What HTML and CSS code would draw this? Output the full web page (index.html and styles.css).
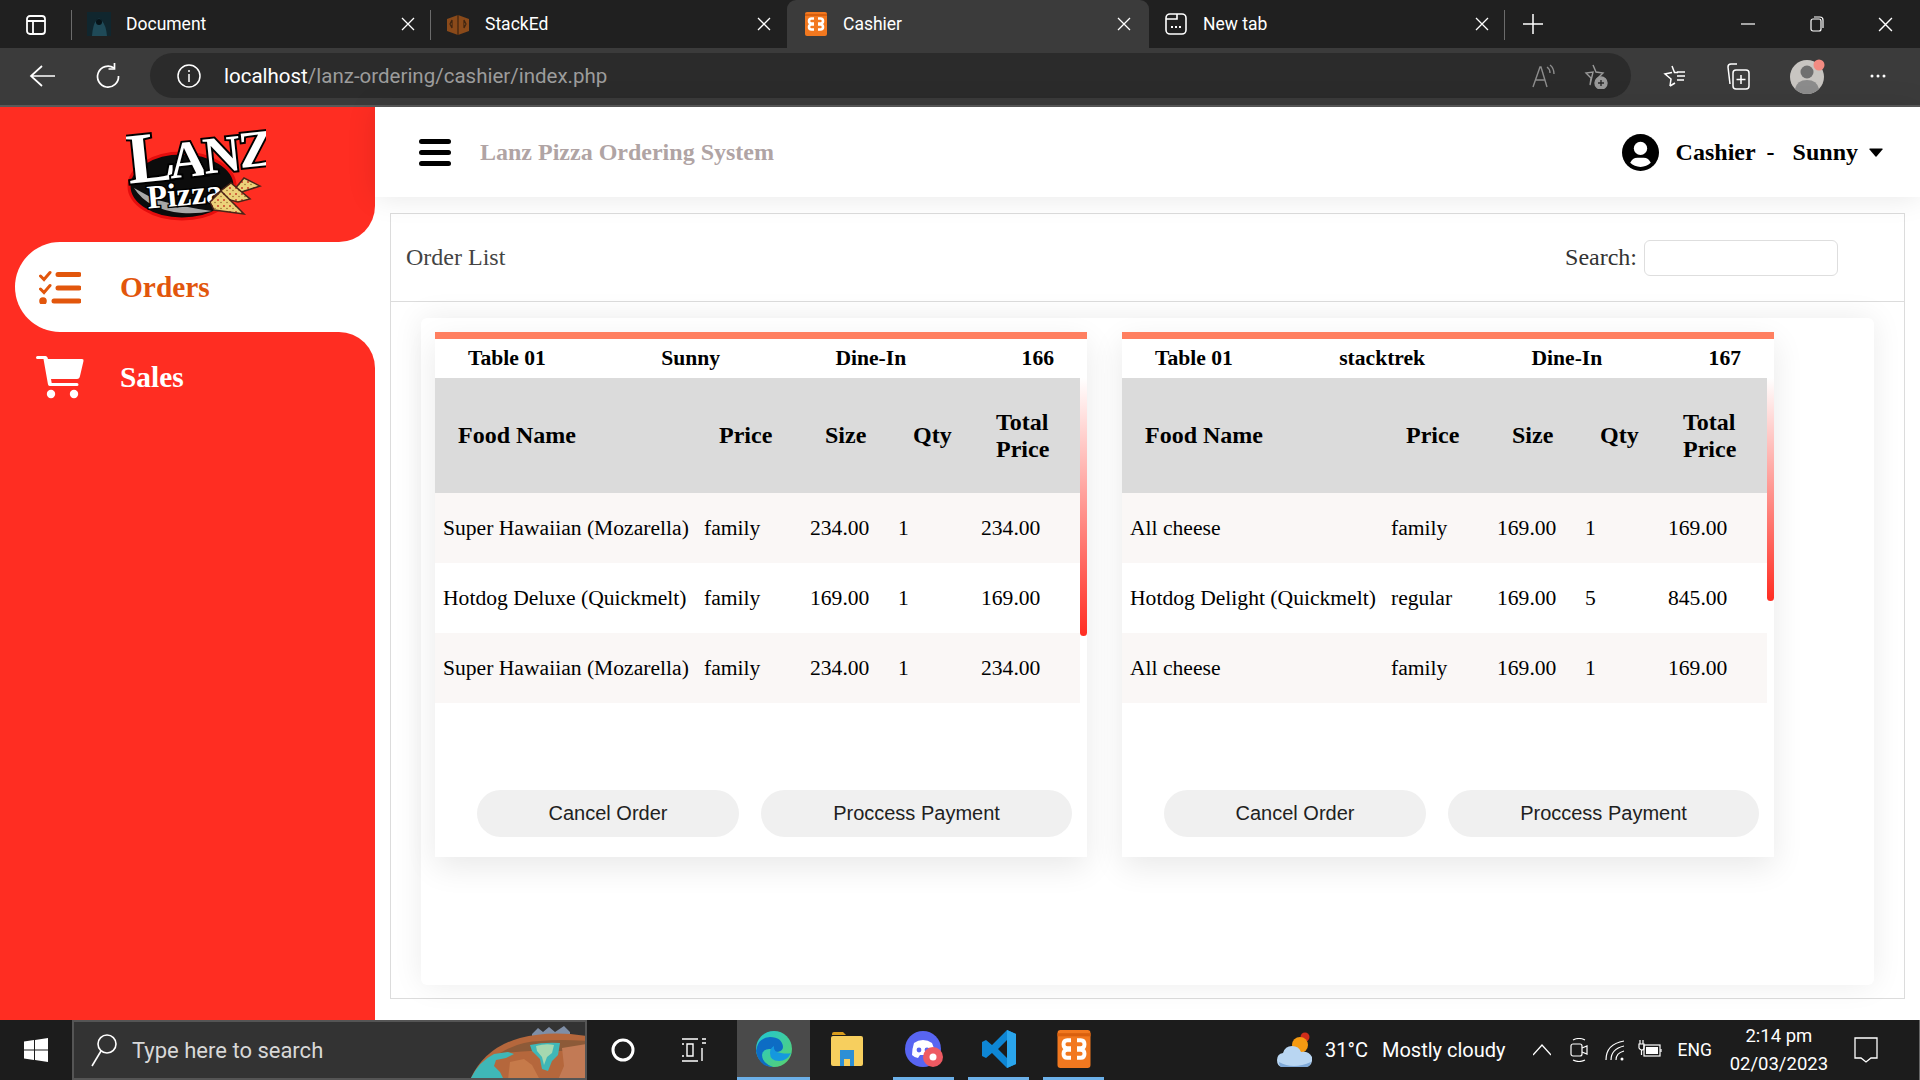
FILE: index.html
```html
<!DOCTYPE html>
<html>
<head>
	<meta charset="utf-8">
	<title>Cashier</title>
	<link rel="stylesheet" href="styles.css">
</head>
<body>
	<svg class="defs" width="0" height="0">
		<symbol id="x-close" viewBox="0 0 14 14"><path d="M1 1l12 12M13 1L1 13" stroke="currentColor" stroke-width="1.3" fill="none"/></symbol>
		<symbol id="xampp" viewBox="0 0 24 24">
			<rect x="1" width="22" height="24" rx="2" fill="#f2781f"/>
			<rect x="1" y="2" width="22" height="2" fill="#d9600f"/>
			<path d="M10 6.5H7.500Q5 6.500 5 9t2.500 2.500H10M10 12.500H7.500Q5 12.500 5 15t2.500 2.500H10M14 6.500h2.500Q19 6.500 19 9t-2.500 2.500H14M14 12.500h2.500Q19 12.500 19 15t-2.500 2.500H14" stroke="#fff" stroke-width="2.600" fill="none"/>
		</symbol>
	</svg>

	<div class="tabstrip">
		<div class="tab-toggle">
			<svg width="22" height="22" viewBox="0 0 22 22" fill="none" stroke="#fff" stroke-width="1.800"><rect x="2" y="2" width="18" height="18" rx="3"/><path d="M2 7h18M8 7v13"/></svg>
		</div>
		<div class="tab tab-sep">
			<svg class="favicon" viewBox="0 0 24 24"><rect width="24" height="30" fill="#10262e"/><path d="M5 24q1-12 4-15 3-5 6 0 4 4 5 15z" fill="#1f4a58"/><circle cx="12" cy="10" r="3" fill="#071318"/></svg>
			<span class="tab-title">Document</span>
			<svg class="tab-x"><use href="#x-close"/></svg>
		</div>
		<div class="tab">
			<svg class="favicon" viewBox="0 0 24 24"><path d="M12 3l11 4v12l-11 4-11-4V7z" fill="#8a4a1a"/><path d="M12 3v20M6 8l-2 4 2 4zM18 8l2 4-2 4z" stroke="#3e2410" stroke-width="1.200" fill="#b36a2a"/></svg>
			<span class="tab-title">StackEd</span>
			<svg class="tab-x"><use href="#x-close"/></svg>
		</div>
		<div class="tab tab-active">
			<svg class="favicon"><use href="#xampp"/></svg>
			<span class="tab-title">Cashier</span>
			<svg class="tab-x"><use href="#x-close"/></svg>
		</div>
		<div class="tab tab-new tab-sep">
			<svg class="favicon" viewBox="0 0 24 24" fill="none" stroke="#fff" stroke-width="1.600"><rect x="2" y="2" width="20" height="20" rx="4"/><path d="M2 7h11V2"/><path d="M7 15h2M11 15h2M15 15h2" stroke-width="2"/></svg>
			<span class="tab-title">New tab</span>
			<svg class="tab-x"><use href="#x-close"/></svg>
		</div>
		<svg class="tab-plus" viewBox="0 0 20 20" stroke="#fff" stroke-width="1.500"><path d="M10 0v20M0 10h20"/></svg>
		<div class="win-controls">
			<div class="win-btn"><svg width="14" height="14" viewBox="0 0 14 14" stroke="#fff" stroke-width="1.200"><path d="M0 7h14"/></svg></div>
			<div class="win-btn"><svg width="14" height="16" viewBox="0 0 14 16" fill="none" stroke="#fff" stroke-width="1.200"><rect x="1" y="3" width="10" height="12" rx="2"/><path d="M4 1h6q3 0 3 3v8"/></svg></div>
			<div class="win-btn"><svg class="win-x"><use href="#x-close"/></svg></div>
		</div>
	</div>

	<div class="toolbar">
		<div class="tool-btn"><svg width="26" height="24" viewBox="0 0 26 24" fill="none" stroke="#fff" stroke-width="1.700"><path d="M13 2L2 12l11 10M2 12h24"/></svg></div>
		<div class="tool-btn"><svg width="26" height="26" viewBox="0 0 26 26" fill="none" stroke="#fff" stroke-width="1.700"><path d="M19 5a10.500 10.500 0 1 0 4.500 8"/><path d="M19.500 0v6h-6"/></svg></div>
		<div class="address">
			<svg class="addr-info" viewBox="0 0 24 24" fill="none" stroke="#fff" stroke-width="1.500"><circle cx="12" cy="12" r="11"/><path d="M12 10v8M12 6v2"/></svg>
			<span class="url"><span class="url-host">localhost</span>/lanz-ordering/cashier/index.php</span>
			<div class="addr-right">
				<svg width="24" height="24" viewBox="0 0 24 24" fill="none" stroke="#8d8d8d" stroke-width="1.400"><path d="M2 23L9 3h1l6 20M5 16h9M16 3q3 2 3 6M19 1q4 3 4 9"/></svg>
				<svg width="26" height="26" viewBox="0 0 26 26" fill="none" stroke="#9a9a9a" stroke-width="1.400"><path d="M11 2l3 7 7 1-5 5 1 4M8 22l1-7-5-5 7-1z"/><circle cx="19" cy="20" r="6" fill="#9a9a9a"/><path d="M19 17v6M16 20h6" stroke="#2b2b2b"/></svg>
			</div>
		</div>
		<div class="tool-right">
			<svg width="24" height="24" viewBox="0 0 24 24" fill="none" stroke="#fff" stroke-width="1.500"><path d="M10 2l2.500 6.500H16M8 22l1-7-6-5 7-1.500M8 22l5-3M15 12h8M15 16h7M15 8h8"/></svg>
			<svg width="24" height="28" viewBox="0 0 24 28" fill="none" stroke="#fff" stroke-width="1.500"><path d="M11 2H5Q2 2 2 5l2 17"/><rect x="7" y="8" width="16" height="19" rx="3"/><path d="M15 13v9M10.500 17.500h9"/></svg>
			<svg width="36" height="36" viewBox="0 0 36 36"><circle cx="17" cy="19" r="17" fill="#c8c5c1"/><circle cx="17" cy="14" r="6.500" fill="#6f6f6f"/><path d="M5 31q2-9 12-9t12 9q-5 5-12 5T5 31z" fill="#8c8c8c"/><circle cx="29" cy="7" r="5.500" fill="#f28b82"/></svg>
			<svg width="24" height="6" viewBox="0 0 24 6" fill="#fff"><circle cx="6" cy="3" r="1.500"/><circle cx="12" cy="3" r="1.500"/><circle cx="18" cy="3" r="1.500"/></svg>
		</div>
	</div>

	<div class="app">
		<aside class="sidebar">
			<div class="logo-box">
				<svg class="logo" width="140" height="100" viewBox="0 0 140 100">
					<defs>
						<pattern id="cheese" width="6" height="6" patternUnits="userSpaceOnUse"><rect width="6" height="6" fill="#ecd27a"/><circle cx="2" cy="2" r="1" fill="#c9402a"/><circle cx="5" cy="4.500" r=".7" fill="#8a5a20"/></pattern>
					</defs>
					<ellipse cx="56" cy="60" rx="53" ry="33" fill="#0c0c0c" stroke="#e40d0d" stroke-width="3"/>
					<path d="M8 62q14 22 48 25 16 1 30-2-30-4-58-12z" fill="#a8a8a8"/>
					<g class="logo-lanz">
						<text transform="rotate(-6 30 55)" x="3" y="55"><tspan class="logo-big">L</tspan><tspan dx="-6" dy="-1">A</tspan><tspan dx="-3" dy="-1">N</tspan><tspan dx="-2" dy="-2">Z</tspan></text>
					</g>
					<text class="logo-pizza" transform="rotate(-5 50 80)" x="22" y="80">Pizza</text>
					<g stroke="#4a2418" stroke-width="1.500">
						<polygon points="103,70 118,52 134,60 128,62" fill="url(#cheese)"/>
						<polygon points="88,70 105,57 124,73 112,76" fill="url(#cheese)"/>
						<polygon points="84,76 95,65 118,88 88,84" fill="url(#cheese)"/>
					</g>
				</svg>
			</div>
			<div class="nav-row">
				<a class="nav-item nav-active">
					<span class="nav-icon">
						<svg width="42" height="34" viewBox="0 0 42 34" fill="none" stroke="#e2560c" stroke-linecap="round"><path d="M1.500 6l3.500 3.500L11 2.500M1.500 19l3.500 3.500L11 15.500" stroke-width="3"/><path d="M19 4.500h21M19 18h21M15 31h25" stroke-width="5"/><circle cx="4" cy="31" r="3.800" fill="#e2560c" stroke="none"/></svg>
					</span>
					Orders
				</a>
			</div>
			<div class="nav-rest">
				<a class="nav-item">
					<span class="nav-icon">
						<svg width="48" height="43" viewBox="0 0 48 43" fill="#fff"><path d="M1.500 0h8q1.500 0 2 1.500L12 3h34q2 0 1.500 2L44 20q-.5 3-3 3H15l.7 4H41q1.500 0 1.500 1.500T41 30H14q-1.500 0-2-1.500L7.500 3h-6Q0 3 0 1.500T1.500 0z"/><circle cx="15" cy="38" r="4.200"/><circle cx="38" cy="38" r="4.200"/></svg>
					</span>
					Sales
				</a>
			</div>
		</aside>

		<div class="content">
			<header class="topbar">
				<div class="hamburger"><span></span><span></span><span></span></div>
				<span class="brand">Lanz Pizza Ordering System</span>
				<div class="userbox">
					<svg class="user-icon" viewBox="0 0 36 36"><circle cx="18" cy="18" r="18"/><circle cx="18" cy="14" r="6.500" fill="#fff"/><path d="M8 28q2-5 7-5h6q5 0 7 5-4 4-10 4t-10-4z" fill="#fff"/></svg>
					<span class="user-role">Cashier</span>
					<span class="user-dash">-</span>
					<span class="user-name">Sunny</span>
					<svg class="caret" viewBox="0 0 14 9"><path d="M1 .5h12q1 0 .5 1L7.500 8.500q-.5.500-1 0L.5 1.500Q0 .5 1 .5z"/></svg>
				</div>
			</header>

			<main class="main">
				<section class="order-list">
					<div class="list-head">
						<span class="list-title">Order List</span>
						<label class="search">Search:<input class="search-input" type="text"></label>
					</div>
					<div class="list-body">
						<div class="panel">
							<article class="order-card">
								<div class="order-info"><span>Table 01</span><span>Sunny</span><span>Dine-In</span><span>166</span></div>
								<div class="order-scroll">
									<table class="order-table">
										<colgroup><col class="c-name"><col class="c-price"><col class="c-size"><col class="c-qty"><col class="c-total"></colgroup>
										<thead><tr><th>Food Name</th><th>Price</th><th>Size</th><th>Qty</th><th>Total Price</th></tr></thead>
										<tbody>
											<tr><td>Super Hawaiian (Mozarella)</td><td>family</td><td>234.00</td><td>1</td><td>234.00</td></tr>
											<tr><td>Hotdog Deluxe (Quickmelt)</td><td>family</td><td>169.00</td><td>1</td><td>169.00</td></tr>
											<tr><td>Super Hawaiian (Mozarella)</td><td>family</td><td>234.00</td><td>1</td><td>234.00</td></tr>
										</tbody>
									</table>
									<div class="scroll-track"><div class="scroll-thumb" style="height: 258px"></div></div>
								</div>
								<div class="order-actions">
									<button class="btn btn-cancel">Cancel Order</button>
									<button class="btn btn-pay">Proccess Payment</button>
								</div>
							</article>
							<article class="order-card">
								<div class="order-info"><span>Table 01</span><span>stacktrek</span><span>Dine-In</span><span>167</span></div>
								<div class="order-scroll">
									<table class="order-table">
										<colgroup><col class="c-name"><col class="c-price"><col class="c-size"><col class="c-qty"><col class="c-total"></colgroup>
										<thead><tr><th>Food Name</th><th>Price</th><th>Size</th><th>Qty</th><th>Total Price</th></tr></thead>
										<tbody>
											<tr><td>All cheese</td><td>family</td><td>169.00</td><td>1</td><td>169.00</td></tr>
											<tr><td>Hotdog Delight (Quickmelt)</td><td>regular</td><td>169.00</td><td>5</td><td>845.00</td></tr>
											<tr><td>All cheese</td><td>family</td><td>169.00</td><td>1</td><td>169.00</td></tr>
										</tbody>
									</table>
									<div class="scroll-track"><div class="scroll-thumb" style="height: 223px"></div></div>
								</div>
								<div class="order-actions">
									<button class="btn btn-cancel">Cancel Order</button>
									<button class="btn btn-pay">Proccess Payment</button>
								</div>
							</article>
						</div>
					</div>
				</section>
			</main>
		</div>
	</div>

	<footer class="taskbar">
		<div class="start">
			<svg width="24" height="24" viewBox="0 0 24 24" fill="#fff"><path d="M0 3.500l10-1.400v9.400H0zM11 2l13-2v11.500H11zM0 12.500h10v9.400L0 20.500zM11 12.500h13V24l-13-2z"/></svg>
		</div>
		<div class="task-search">
			<svg class="search-glass" viewBox="0 0 26 34" fill="none" stroke="#fff" stroke-width="1.600"><circle cx="16" cy="11" r="9"/><path d="M10 18L1 33"/></svg>
			<span class="search-hint">Type here to search</span>
			<svg class="search-art" viewBox="0 0 117 60">
				<path d="M62 14l6-6 5 4 6-5 6 5 9-6 6 6v8H62z" fill="#7f8ea6"/>
				<path d="M0 60Q14 28 50 18q30-8 67-2v44z" fill="#b5673c"/>
				<path d="M30 33q20-12 40-12 20-2 47 0v10H60z" fill="#8d5a38"/>
				<path d="M0 60q8-18 24-26l14-2 6 2-8 4-10 2-2 6 6 6 4 8zM60 25q14-3 30-2l-2 12-6 6-4 10-6-2-2-10-8-8z" fill="#3fb7b7"/>
				<path d="M66 26q10-3 18-1l-2 8-5 4-3 8-2-8-5-6z" fill="#a5d8b0"/>
				<path d="M40 42l14-3 8 6 8 15H38z" fill="#c67a4a"/>
				<path d="M92 28l25-4v36H88l6-14z" fill="#c27a55"/>
			</svg>
		</div>
		<div class="task-btn"><svg width="24" height="24" viewBox="0 0 24 24" fill="none" stroke="#fff" stroke-width="3"><circle cx="12" cy="12" r="10"/></svg></div>
		<div class="task-btn"><svg width="24" height="24" viewBox="0 0 24 24" fill="none" stroke="#fff" stroke-width="1.400"><path d="M0 1h16M0 23h16M20 1h4M20 5h4M20 10v13M5 6v12h6V6zM0 6h2M0 18h2"/></svg></div>
		<div class="app-edge">
			<svg width="38" height="38" viewBox="0 0 38 38">
				<defs><linearGradient id="edge-a" x1="0" y1="0" x2="1" y2="1"><stop offset="0" stop-color="#1fc6d6"/><stop offset="1" stop-color="#5cd26a"/></linearGradient></defs>
				<circle cx="19" cy="19" r="18" fill="url(#edge-a)"/>
				<path d="M2 17Q4 8 15 7q12 0 13 10 0 5-8 5-5 0-4-3-8-1-9 6 0 8 11 12Q4 37 1 21z" fill="#0d6cc4"/>
				<path d="M16 19q3-4 8-3 5 2 3 6-4 3-11 0-2-1 0-3z" fill="#1c1c1c" opacity="0"/>
				<path d="M36 23q-4 8-12 8-9 0-9-8 0-5 4-7-1 6 7 7 6 1 10 0z" fill="#1598de"/>
			</svg>
		</div>
		<div class="app-pin">
			<svg width="32" height="38" viewBox="0 0 32 38"><path d="M1 4q0-2 2-2h9l3 3h-14z" fill="#d99c1c"/><rect x="0" y="6" width="32" height="30" rx="2" fill="#f7cf5e"/><path d="M9 20h14v16H19v-7h-6v7H9z" fill="#2d8fd5"/></svg>
		</div>
		<div class="app-pin app-open">
			<svg width="40" height="38" viewBox="0 0 40 38"><circle cx="19" cy="19" r="18" fill="#5865f2"/><path d="M10 13q4-3 9-3t9 3q3 6 3 12-3 3-6 3l-2-3H16l-2 3q-3 0-6-3 0-6 2-12z" fill="#fff"/><circle cx="15" cy="20" r="2.400" fill="#5865f2"/><circle cx="23" cy="20" r="2.400" fill="#5865f2"/><circle cx="29" cy="27" r="10" fill="#ee5a62"/><circle cx="29" cy="27" r="3.500" fill="#fff"/></svg>
		</div>
		<div class="app-pin app-open">
			<svg width="36" height="38" viewBox="0 0 36 38"><path d="M26 0l9 4v30l-9 4-15-15-6 5-4-2V12l4-2 6 5zM26 10l-9 9 9 9z" fill="#0e86d4"/><path d="M26 0l9 4v30l-9 4z" fill="#2aa5ec"/></svg>
		</div>
		<div class="app-pin app-open">
			<svg width="36" height="38" viewBox="0 0 24 24" preserveAspectRatio="none"><use href="#xampp"/></svg>
		</div>
		<div class="tray">
			<svg class="tray-cloud" viewBox="0 0 36 38"><circle cx="28" cy="6" r="4.500" fill="#cf2d1a"/><circle cx="23" cy="14" r="8" fill="#f59a12"/><path d="M5 36q-5-1-5-7 0-6 6-7 2-7 9-7t9 6q8-1 11 5 1 9-6 10z" fill="#b9d6f2"/><path d="M2 31q14 8 32 0-1 5-5 5H5q-3 0-3-5z" fill="#7fa9d8"/></svg>
			<span class="tray-temp">31°C</span>
			<span class="tray-sky">Mostly cloudy</span>
			<svg class="tray-chev" viewBox="0 0 18 12" fill="none" stroke="#fff" stroke-width="1.300"><path d="M0 11l9-10 9 10"/></svg>
			<svg class="tray-meet" viewBox="0 0 18 24" fill="none" stroke="#fff" stroke-width="1.200"><rect x="1" y="6" width="11" height="12" rx="2"/><path d="M12 10l5-2v8l-5-2M3 2q6-3 12 0M3 22q6 3 12 0"/></svg>
			<svg class="tray-wifi" viewBox="0 0 20 24" fill="none" stroke="#fff" stroke-width="1.200"><path d="M1 22Q1 6 19 3M6 22Q6 11 19 8M11 22q0-7 8-9"/><circle cx="17" cy="21" r="1.500" fill="#fff" stroke="none"/></svg>
			<svg class="tray-batt" viewBox="0 0 24 20" fill="none" stroke="#fff" stroke-width="1.200"><rect x="6" y="5" width="16" height="11"/><rect x="8" y="7" width="12" height="7" fill="#fff" stroke="none"/><path d="M23 9v3M2 0v4M5 0v4M1 4h5v4q0 2-2 2T1 8zM3.500 10v5"/></svg>
			<span class="tray-lang">ENG</span>
			<div class="clock"><span>2:14 pm</span><span>02/03/2023</span></div>
			<svg class="tray-note" viewBox="0 0 24 26" fill="none" stroke="#fff" stroke-width="1.300"><path d="M1 1h22v20h-6l-5 4-5-4H1z"/></svg>
		</div>
	</footer>
</body>
</html>
```

FILE: styles.css
```css
* {
	box-sizing: border-box;
}

html, body {
	height: 100%;
}

body {
	margin: 0;
	display: flex;
	flex-direction: column;
	overflow: hidden;
	background: #fff;
	font-family: "Liberation Serif", serif;
}

.defs {
	display: none;
}

/* browser tabs */
.tabstrip {
	height: 48px;
	flex: none;
	display: flex;
	align-items: stretch;
	background: #202020;
	color: #fff;
	font-family: Roboto, "Noto Sans", sans-serif;
}

.tab-toggle {
	width: 72px;
	display: flex;
	align-items: center;
	padding-left: 25px;
	position: relative;
	border-right: 1px solid #6b6b6b;
	margin: 10px 0 8px;
}

.tab {
	width: 356px;
	display: flex;
	align-items: center;
	padding: 0 16px 0 15px;
	font-size: 17.5px;
}

.tab-sep {
	width: 359px;
	position: relative;
}

.tab-sep::after {
	content: "";
	position: absolute;
	right: 0;
	top: 10px;
	bottom: 8px;
	width: 1px;
	background: #6b6b6b;
}

.tab-active {
	width: 362px;
	padding: 0 18px 0 17px;
	background: #3b3b3b;
	border-radius: 9px 9px 0 0;
}

.tab-new {
	width: 356px;
}

.favicon {
	width: 24px;
	height: 24px;
	flex: none;
}

.tab-title {
	margin-left: 15px;
}

.tab-x {
	width: 14px;
	height: 14px;
	margin-left: auto;
	color: #fff;
}

.tab-plus {
	width: 20px;
	height: 20px;
	margin: 14px 0 0 18px;
}

.win-controls {
	margin-left: auto;
	display: flex;
}

.win-btn {
	width: 69px;
	display: flex;
	align-items: center;
	justify-content: center;
}

.win-x {
	width: 15px;
	height: 15px;
	color: #fff;
}

/* browser toolbar */
.toolbar {
	height: 59px;
	flex: none;
	display: flex;
	align-items: center;
	padding: 0 0 2px 9px;
	background: #3b3b3b;
	border-bottom: 2px solid #595959;
	font-family: Roboto, "Noto Sans", sans-serif;
}

.tool-btn {
	width: 66px;
	display: flex;
	justify-content: center;
}

.address {
	width: 1481px;
	height: 45px;
	margin-left: 9px;
	display: flex;
	align-items: center;
	padding: 0 23px 0 27px;
	background: #2b2b2b;
	border-radius: 23px;
}

.addr-info {
	width: 24px;
	height: 24px;
}

.url {
	margin-left: 23px;
	font-size: 20.5px;
	color: #9c9c9c;
}

.url-host {
	color: #fff;
}

.addr-right {
	margin-left: auto;
	display: flex;
	align-items: center;
	gap: 27px;
}

.tool-right {
	margin-left: 31px;
	display: flex;
	align-items: center;
	gap: 40px;
}

/* page */
.app {
	flex: 1;
	min-height: 0;
	display: flex;
}

.sidebar {
	width: 375px;
	flex: none;
	display: flex;
	flex-direction: column;
	background: #fff;
}

.logo-box {
	height: 135px;
	padding: 19px 0 0 126px;
	background: #ff2d22;
	border-bottom-right-radius: 36px;
}

.logo {
	display: block;
}

.logo-lanz text {
	font-family: "Liberation Serif", serif;
	font-weight: bold;
	font-size: 52px;
	fill: #fff;
	stroke: #000;
	stroke-width: 4px;
	paint-order: stroke;
}

.logo-big {
	font-size: 72px;
}

.logo-pizza {
	font-family: "Liberation Serif", serif;
	font-weight: bold;
	font-size: 33px;
	fill: #fff;
	stroke: #000;
	stroke-width: 3px;
	paint-order: stroke;
}

.nav-row {
	height: 90px;
	padding-left: 15px;
	background: #ff2d22;
}

.nav-rest {
	flex: 1;
	padding-left: 15px;
	background: #ff2d22;
	border-top-right-radius: 36px;
}

.nav-item {
	height: 90px;
	display: flex;
	align-items: center;
	gap: 36px;
	padding-left: 21px;
	font-size: 29.4px;
	font-weight: bold;
	color: #fff;
}

.nav-active {
	background: #fff;
	color: #e2560c;
	border-radius: 45px 0 0 45px;
}

.nav-icon {
	width: 48px;
	display: flex;
	justify-content: center;
}

.content {
	flex: 1;
	min-width: 0;
	display: flex;
	flex-direction: column;
}

.topbar {
	height: 90px;
	flex: none;
	display: flex;
	align-items: center;
	padding: 0 37px 0 44px;
	background: #fff;
	position: relative;
	z-index: 1;
	box-shadow: 0 0 30px rgba(0, 0, 0, .1);
	font-size: 24px;
	font-weight: bold;
}

.hamburger {
	width: 32px;
	display: flex;
	flex-direction: column;
	gap: 6px;
}

.hamburger span {
	height: 5px;
	background: #000;
	border-radius: 3px;
}

.brand {
	margin-left: 29px;
	color: #b0a4a4;
}

.userbox {
	margin-left: auto;
	display: flex;
	align-items: center;
}

.user-icon {
	width: 37px;
	height: 37px;
}

.user-role {
	margin-left: 17px;
}

.user-dash {
	margin-left: 11px;
}

.user-name {
	margin-left: 18px;
}

.caret {
	width: 14px;
	height: 9px;
	margin-left: 11px;
}

.main {
	flex: 1;
	min-height: 0;
	padding: 16px 15px 21px;
	background: #fff;
}

.order-list {
	height: 100%;
	display: flex;
	flex-direction: column;
	border: 1px solid #dcdcdc;
}

.list-head {
	height: 88px;
	flex: none;
	display: flex;
	align-items: center;
	padding: 0 66px 0 15px;
	border-bottom: 1px solid #dcdcdc;
	font-size: 24px;
	color: #444;
}

.search {
	margin-left: auto;
	display: flex;
	align-items: center;
	gap: 7px;
	color: #333;
}

.search-input {
	width: 194px;
	height: 36px;
	border: 1px solid #dedede;
	border-radius: 6px;
	background: #fff;
}

.list-body {
	flex: 1;
	min-height: 0;
	padding: 16px 30px 13px;
}

.panel {
	height: 100%;
	display: flex;
	gap: 35px;
	padding: 14px;
	background: #fff;
	border-radius: 6px;
	box-shadow: 0 0 30px rgba(0, 0, 0, .08);
}

.order-card {
	width: 652px;
	height: 525px;
	display: flex;
	flex-direction: column;
	border-top: 7px solid #ff7f60;
	background: #fff;
	box-shadow: 0 10px 30px rgba(0, 0, 0, .09);
}

.order-info {
	height: 39px;
	flex: none;
	display: flex;
	align-items: center;
	justify-content: space-between;
	padding: 0 33px;
	font-size: 21.6px;
	font-weight: bold;
}

.order-scroll {
	flex: 1;
	min-height: 0;
	display: flex;
}

.order-table {
	width: 645px;
	height: 325px;
	table-layout: fixed;
	border-collapse: collapse;
}

.c-name { width: 261px; }
.c-price { width: 106px; }
.c-size { width: 88px; }
.c-qty { width: 83px; }
.c-total { width: 107px; }

.order-table th {
	height: 115px;
	padding: 0 8px 0 23px;
	text-align: left;
	font-size: 24px;
	background: #dbdbdb;
}

.order-table td {
	height: 70px;
	padding: 0 8px;
	font-size: 21.6px;
	white-space: nowrap;
}

.order-table tbody tr:nth-child(odd) td {
	background: #faf7f6;
}

.scroll-track {
	width: 7px;
	flex: none;
}

.scroll-thumb {
	background: linear-gradient(to bottom, #fff, #ff2d22);
	border-radius: 0 0 4px 4px;
}

.order-actions {
	flex: none;
	display: flex;
	justify-content: flex-end;
	gap: 22px;
	padding: 0 15px 20px;
}

.btn {
	height: 47px;
	border: 0;
	border-radius: 24px;
	background: #f0f0f0;
	font-family: "Liberation Sans", sans-serif;
	font-size: 20px;
	color: #212121;
}

.btn-cancel {
	width: 262px;
}

.btn-pay {
	width: 311px;
}

/* windows taskbar */
.taskbar {
	height: 60px;
	flex: none;
	display: flex;
	background: #1c1c1c;
	color: #fff;
	font-family: Roboto, "Noto Sans", sans-serif;
}

.start {
	width: 72px;
	display: flex;
	align-items: center;
	justify-content: center;
}

.task-search {
	width: 515px;
	display: flex;
	align-items: center;
	padding-left: 17px;
	position: relative;
	background: #333;
	border: 2px solid #555;
	overflow: hidden;
}

.search-glass {
	width: 26px;
	height: 34px;
}

.search-hint {
	margin-left: 15px;
	font-size: 22px;
	color: #d8d8d8;
}

.search-art {
	position: absolute;
	right: -2px;
	bottom: -2px;
	width: 117px;
	height: 60px;
}

.task-btn {
	width: 71px;
	display: flex;
	align-items: center;
	justify-content: center;
}

.app-edge {
	width: 73px;
	margin-left: 8px;
	display: flex;
	align-items: center;
	justify-content: center;
	background: #4a4a4a;
	border-bottom: 3px solid #6cb0e8;
}

.app-pin {
	width: 61px;
	margin-left: 14px;
	display: flex;
	align-items: center;
	justify-content: center;
	border-bottom: 3px solid transparent;
}

.app-edge + .app-pin {
	width: 74px;
	margin-left: 0;
}

.app-edge + .app-pin + .app-pin {
	margin-left: 9px;
}

.app-open {
	border-bottom-color: #6cb0e8;
}

.tray {
	margin-left: auto;
	width: 643px;
	display: flex;
	align-items: center;
	padding-left: 0;
	font-size: 20px;
	border-right: 1px solid #666;
	position: relative;
}

.tray-cloud {
	width: 36px;
	height: 38px;
}

.tray-temp {
	margin-left: 12px;
}

.tray-sky {
	margin-left: 14px;
}

.tray-chev {
	width: 18px;
	height: 12px;
	margin-left: 27px;
}

.tray-meet {
	width: 18px;
	height: 24px;
	margin-left: 19px;
}

.tray-wifi {
	width: 20px;
	height: 24px;
	margin-left: 17px;
}

.tray-batt {
	width: 24px;
	height: 20px;
	margin-left: 13px;
}

.tray-lang {
	margin-left: 16px;
	font-size: 17.5px;
}

.clock {
	width: 100px;
	margin-left: 17px;
	display: flex;
	flex-direction: column;
	align-items: center;
	gap: 8px;
	font-size: 18.5px;
	line-height: 20px;
}

.tray-note {
	width: 24px;
	height: 26px;
	margin-left: 25px;
}
```
